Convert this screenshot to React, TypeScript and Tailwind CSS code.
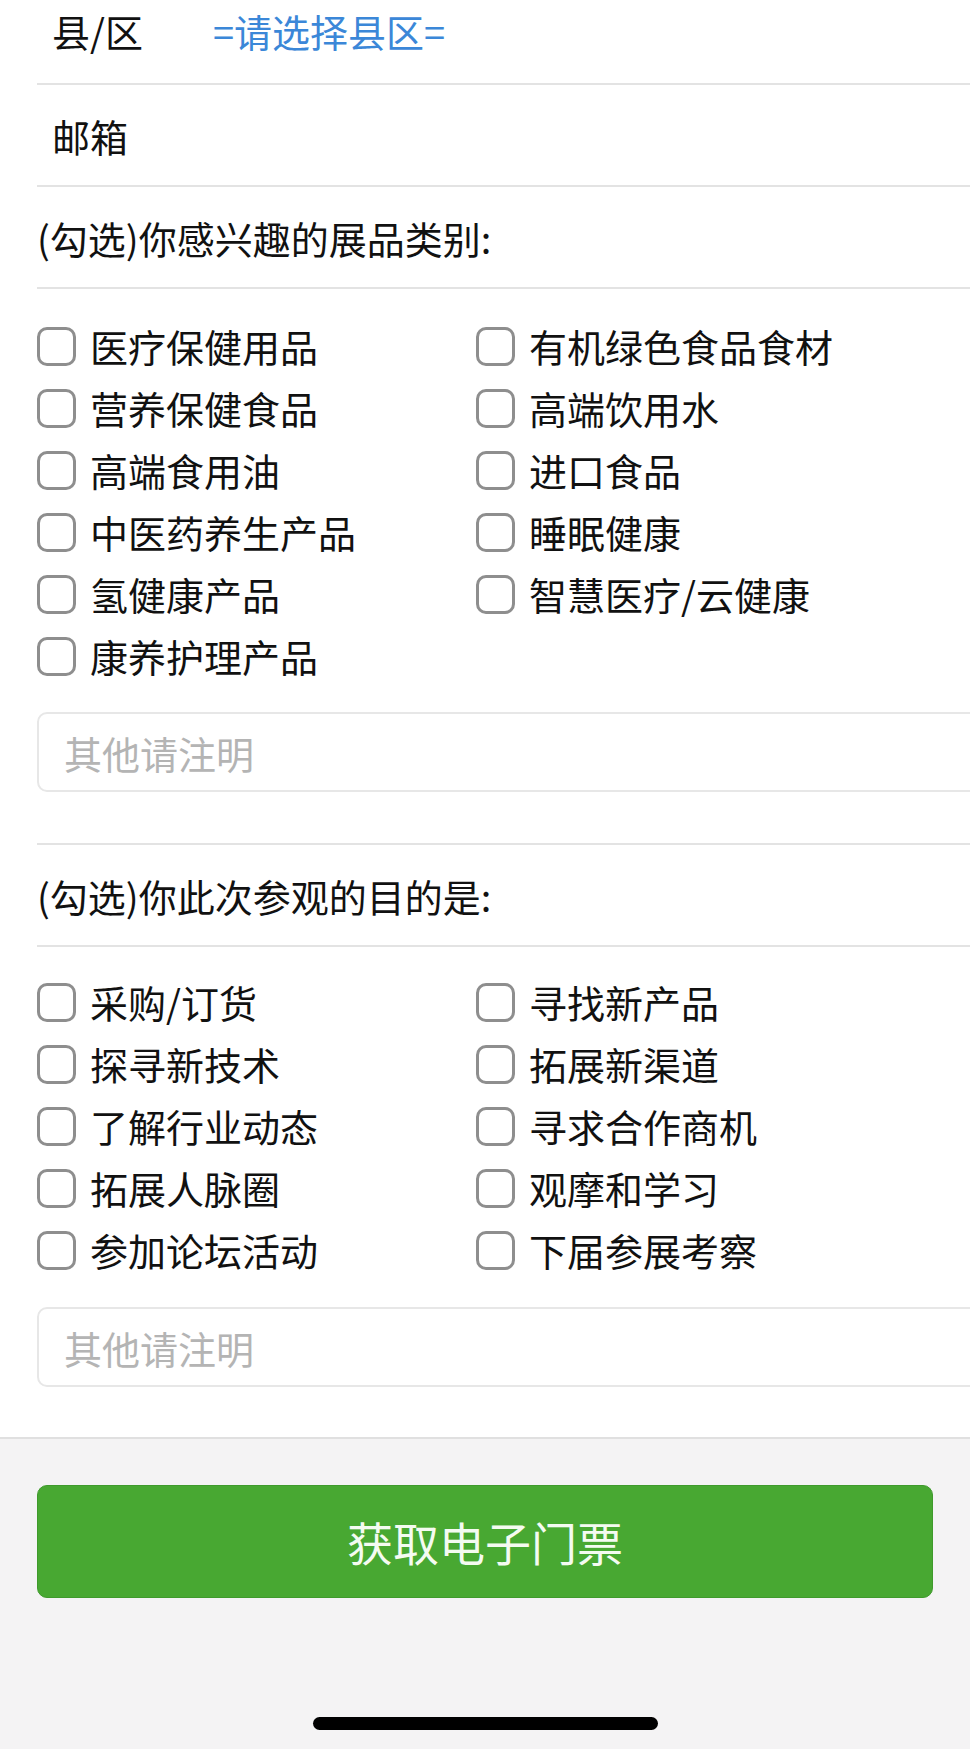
import React, { useState } from 'react'

const font = { fontFamily: '"Noto Sans CJK SC", "Noto Sans", sans-serif' }

const categories = [
   '医疗保健用品',
   '有机绿色食品食材',
   '营养保健食品',
   '高端饮用水',
   '高端食用油',
   '进口食品',
   '中医药养生产品',
   '睡眠健康',
   '氢健康产品',
   '智慧医疗/云健康',
   '康养护理产品',
]

const purposes = [
   '采购/订货',
   '寻找新产品',
   '探寻新技术',
   '拓展新渠道',
   '了解行业动态',
   '寻求合作商机',
   '拓展人脉圈',
   '观摩和学习',
   '参加论坛活动',
   '下届参展考察',
]

const CheckList = ({ items }: { items: string[] }) => {
   const [checked, setChecked] = useState<string[]>([])
   return (
      <div className="grid grid-cols-[439px_1fr]">
         {items.map((item) => (
            <label key={item} className="flex items-center h-[62px] cursor-pointer">
               <input
                  type="checkbox"
                  checked={checked.includes(item)}
                  onChange={() =>
                     setChecked(
                        checked.includes(item)
                           ? checked.filter((c) => c !== item)
                           : [...checked, item]
                     )
                  }
                  className="appearance-none shrink-0 w-[39px] h-[39px] border-[3px] border-[#8e8e8e] rounded-[10px] bg-white checked:bg-[#4aa832] checked:border-[#4aa832]"
               />
               <span className="ml-[14px] text-[38px] text-[#111] leading-[62px] whitespace-nowrap">
                  {item}
               </span>
            </label>
         ))}
      </div>
   )
}

const OtherInput = () => (
   <input
      type="text"
      placeholder="其他请注明"
      className="block w-[calc(100%+20px)] h-[80px] border-2 border-[#e7e7e7] rounded-[10px] pl-[25px] text-[38px] text-[#111] outline-none placeholder:text-[#b4b4b4]"
      style={font}
   />
)

const App = () => {
   return (
      <div className="w-[970px] h-[1749px] flex flex-col bg-white overflow-hidden" style={font}>
         <div className="pl-[37px] overflow-hidden">
            {/* 县区 */}
            <div className="h-[85px] pb-[23px] flex items-center pl-[15px] border-b-2 border-[#e3e3e3]">
               <span className="w-[161px] text-[38px] text-[#111]">县/区</span>
               <span className="text-[38px] text-[#3b87d8]">=请选择县区=</span>
            </div>
            {/* 邮箱 */}
            <div className="h-[102px] flex items-center pl-[15px] border-b-2 border-[#e3e3e3]">
               <span className="text-[38px] text-[#111]">邮箱</span>
            </div>

            <div className="h-[102px] flex items-center border-b-2 border-[#e3e3e3]">
               <span className="text-[38px] text-[#111]">(勾选)你感兴趣的展品类别:</span>
            </div>
            <div className="pt-[26px] pb-[51px] border-b-2 border-[#e3e3e3]">
               <CheckList items={categories} />
               <div className="mt-[25px]">
                  <OtherInput />
               </div>
            </div>

            <div className="h-[102px] flex items-center border-b-2 border-[#e3e3e3]">
               <span className="text-[38px] text-[#111]">(勾选)你此次参观的目的是:</span>
            </div>
            <div className="pt-[24px] pb-[50px]">
               <CheckList items={purposes} />
               <div className="mt-[26px]">
                  <OtherInput />
               </div>
            </div>
         </div>

         <div className="flex-1 flex flex-col bg-[#f4f3f4] border-t-2 border-[#e0e0e0]">
            <div className="px-[37px] pt-[46px]">
               <button className="w-full h-[113px] rounded-[10px] bg-[#48a832] border border-[#3f9a2c] text-[46px] text-[#f4fbf1]">
                  获取电子门票
               </button>
            </div>
            <div className="flex-1" />
            <div className="flex justify-center pb-[19px]">
               <div className="w-[345px] h-[13px] rounded-full bg-black" />
            </div>
         </div>
      </div>
   )
}

export default App
